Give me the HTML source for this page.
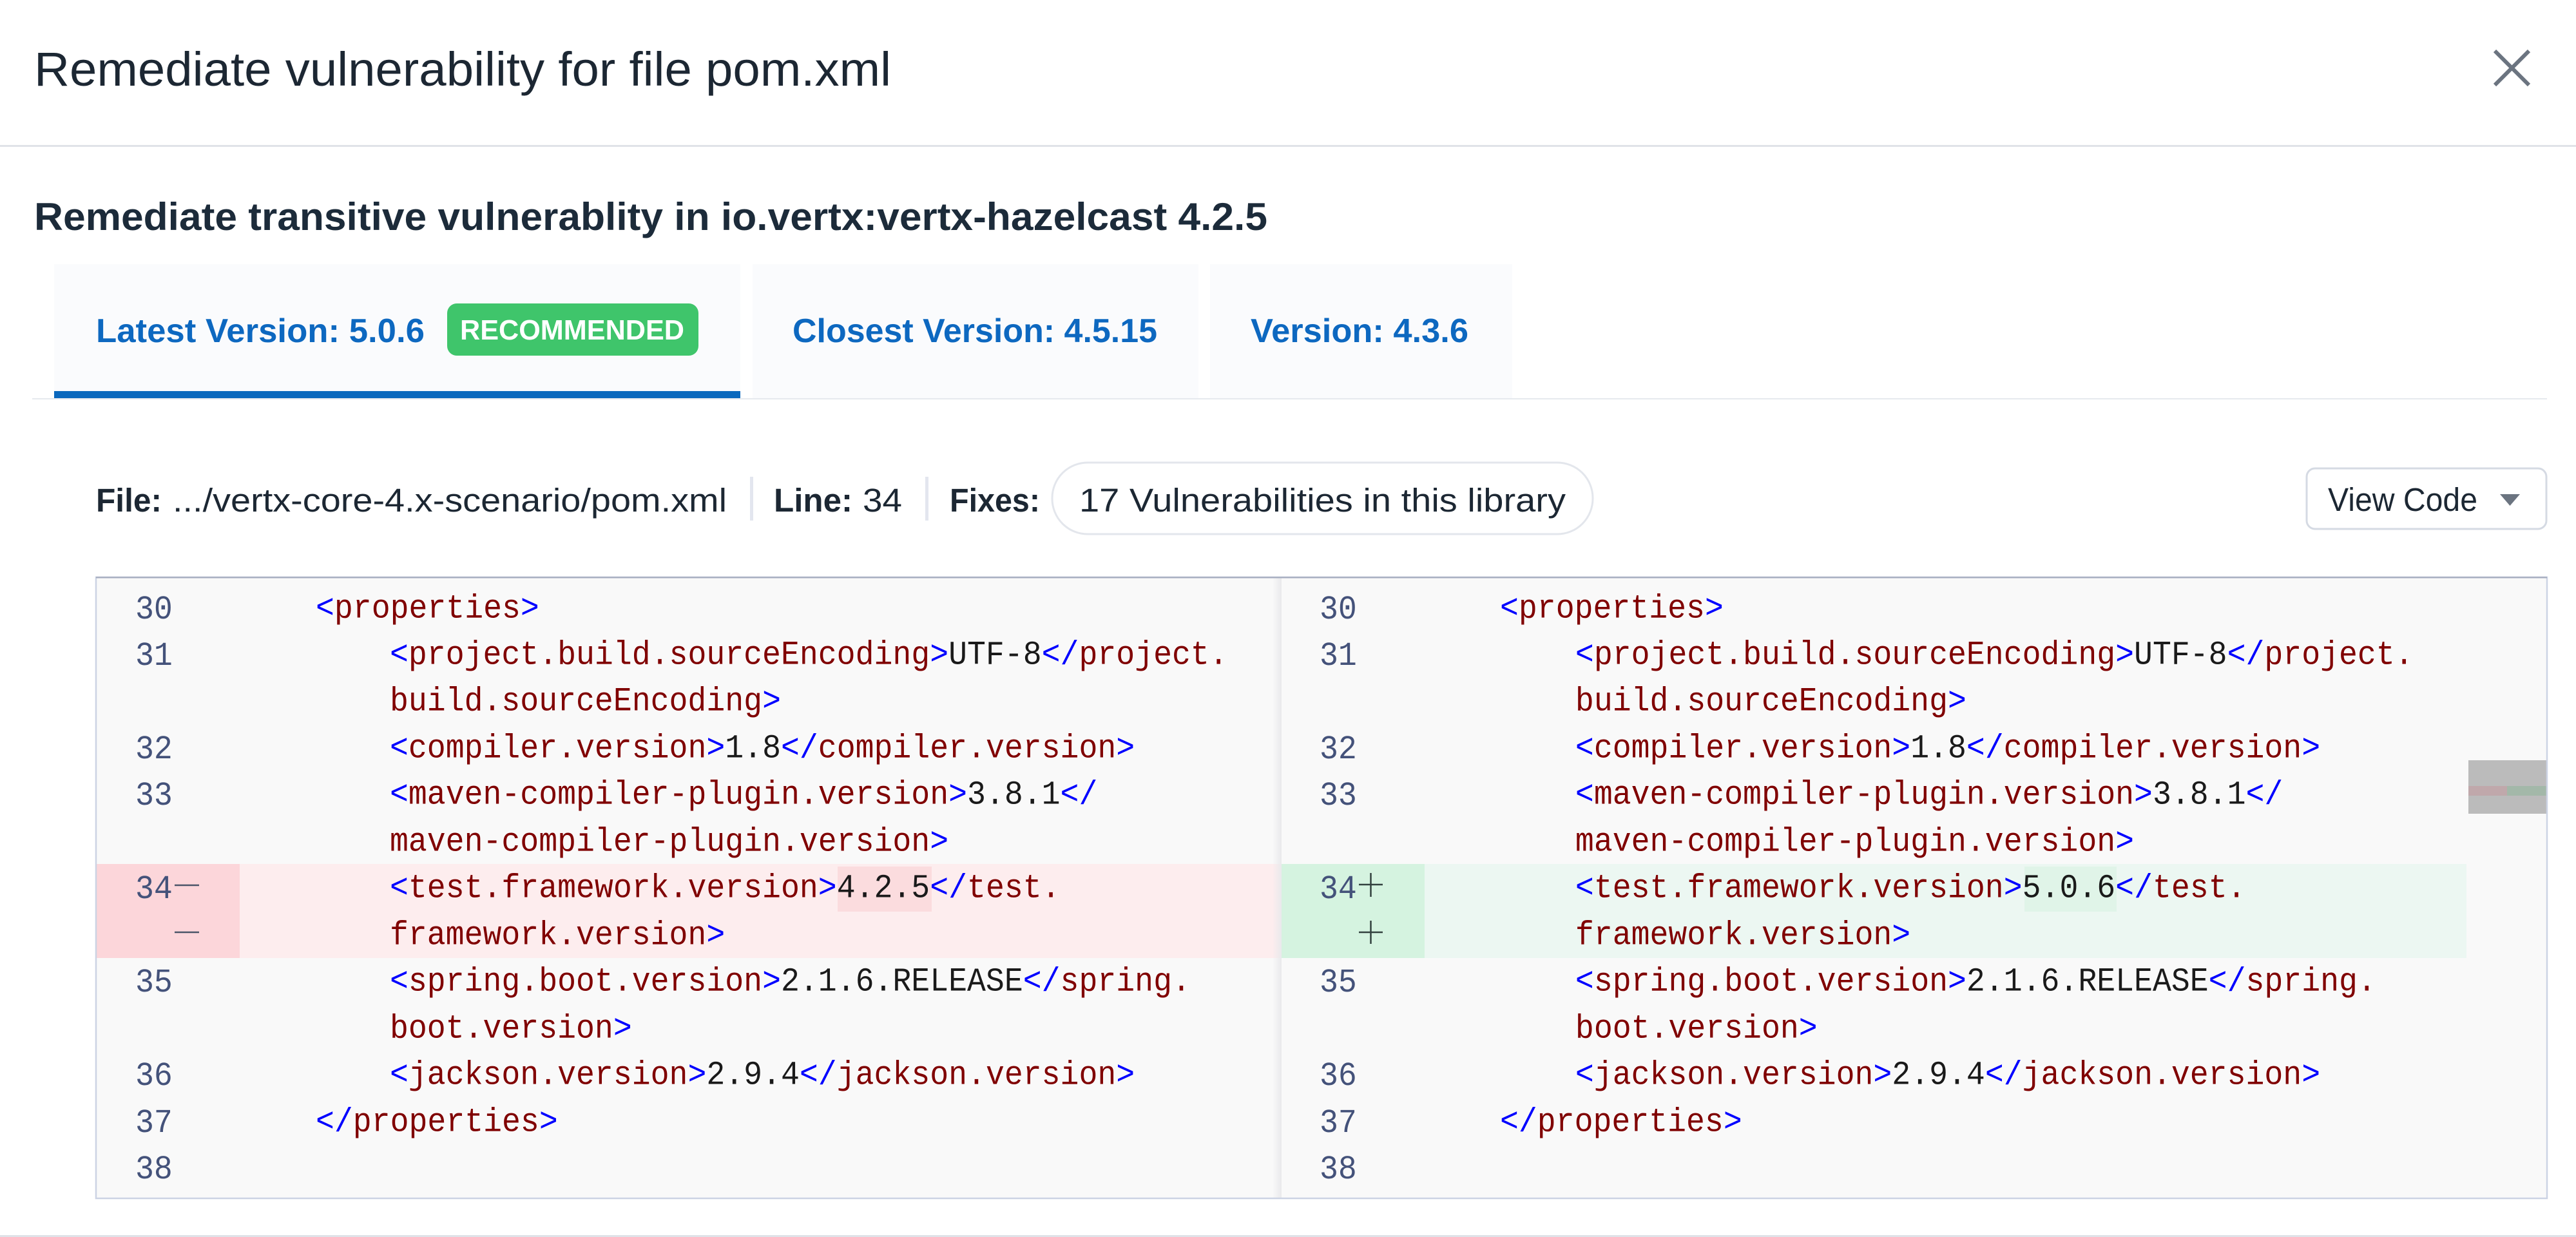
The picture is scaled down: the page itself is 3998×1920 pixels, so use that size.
<!DOCTYPE html>
<html>
<head>
<meta charset="utf-8">
<style>
html,body{margin:0;padding:0;background:#fff;width:3998px;height:1920px;overflow:hidden}
svg{display:block}
.s{font-family:"Liberation Sans",sans-serif}
.m{font-family:"Liberation Mono",monospace;font-size:52px}
.t{fill:#800000}.b{fill:#0000ff}.d{fill:#1a1a1a}.n{fill:#44527a}
</style>
</head>
<body>
<svg width="3998" height="1920" viewBox="0 0 3998 1920" xmlns="http://www.w3.org/2000/svg">
<defs>
<linearGradient id="sh" x1="0" x2="1" y1="0" y2="0"><stop offset="0" stop-color="#e9e9eb" stop-opacity="0"/><stop offset="1" stop-color="#e9e9ec"/></linearGradient>
</defs>
<rect width="3998" height="1920" fill="#fff"/>

<!-- header -->
<text class="s" x="53" y="133" font-size="74" fill="#1c2733" textLength="1330" lengthAdjust="spacingAndGlyphs">Remediate vulnerability for file pom.xml</text>
<path d="M3872 79L3925 132M3925 79L3872 132" stroke="#6b7480" stroke-width="6" fill="none"/>
<rect x="0" y="225" width="3998" height="3" fill="#e0e3e8"/>

<text class="s" x="53" y="357" font-size="60" font-weight="700" fill="#1c2b3a" textLength="1914" lengthAdjust="spacingAndGlyphs">Remediate transitive vulnerablity in io.vertx:vertx-hazelcast 4.2.5</text>

<!-- tabs -->
<rect x="50" y="618" width="3903" height="2" fill="#e6e9ee"/>
<rect x="84" y="410" width="1065" height="197" fill="#fafbfd"/>
<rect x="84" y="607" width="1065" height="11" fill="#0b68bd"/>
<rect x="1168" y="410" width="692" height="208" fill="#fafbfd"/>
<rect x="1878" y="410" width="469" height="208" fill="#fafbfd"/>
<text class="s" x="149" y="531" font-size="52" font-weight="700" fill="#0d68c0" textLength="510" lengthAdjust="spacingAndGlyphs">Latest Version: 5.0.6</text>
<rect x="694" y="471" width="390" height="81" rx="15" fill="#3fc56b"/>
<text class="s" x="714" y="527" font-size="44" font-weight="700" fill="#fff" textLength="348" lengthAdjust="spacingAndGlyphs">RECOMMENDED</text>
<text class="s" x="1230" y="531" font-size="52" font-weight="700" fill="#0d68c0" textLength="566" lengthAdjust="spacingAndGlyphs">Closest Version: 4.5.15</text>
<text class="s" x="1941" y="531" font-size="52" font-weight="700" fill="#0d68c0" textLength="338" lengthAdjust="spacingAndGlyphs">Version: 4.3.6</text>

<!-- file row -->
<text class="s" x="149" y="794" font-size="51" font-weight="700" fill="#1c2733" textLength="102" lengthAdjust="spacingAndGlyphs">File:</text>
<text class="s" x="268" y="794" font-size="51" fill="#1c2733" textLength="860" lengthAdjust="spacingAndGlyphs">.../vertx-core-4.x-scenario/pom.xml</text>
<rect x="1164" y="740" width="5" height="68" fill="#e3e6ef"/>
<text class="s" x="1201" y="794" font-size="51" font-weight="700" fill="#1c2733" textLength="122" lengthAdjust="spacingAndGlyphs">Line:</text>
<text class="s" x="1339" y="794" font-size="51" fill="#1c2733" textLength="61" lengthAdjust="spacingAndGlyphs">34</text>
<rect x="1436" y="740" width="5" height="68" fill="#e3e6ef"/>
<text class="s" x="1474" y="794" font-size="51" font-weight="700" fill="#1c2733" textLength="140" lengthAdjust="spacingAndGlyphs">Fixes:</text>
<rect x="1633" y="718" width="839" height="111" rx="55" fill="#fff" stroke="#e3e6ec" stroke-width="3"/>
<text class="s" x="1675" y="794" font-size="51" fill="#1c2733" textLength="755" lengthAdjust="spacingAndGlyphs">17 Vulnerabilities in this library</text>
<rect x="3580" y="727" width="372" height="94" rx="13" fill="#fff" stroke="#d5dae3" stroke-width="3"/>
<text class="s" x="3613" y="793" font-size="51" fill="#1c2733" textLength="232" lengthAdjust="spacingAndGlyphs">View Code</text>
<path d="M3880 767H3911L3895.500 785Z" fill="#6b7480"/>

<!-- diff box -->
<rect x="149" y="896" width="3804" height="964" fill="#f9f9f9"/>
<rect x="150" y="1341" width="222" height="146" fill="#fcd6da"/>
<rect x="372" y="1341" width="1617" height="146" fill="#fdedee"/>
<rect x="1300" y="1345" width="146" height="70" fill="#fbdcde"/>
<rect x="1989" y="1341" width="222" height="146" fill="#d5f3e0"/>
<rect x="2211" y="1341" width="1617" height="146" fill="#ecf7f2"/>
<rect x="3142" y="1345" width="143" height="70" fill="#e0f4e8"/>
<rect x="1975" y="896" width="14" height="964" fill="url(#sh)"/>
<rect x="3831" y="1180" width="121" height="83" fill="#bbbbbb"/>
<rect x="3831" y="1220" width="60" height="15" fill="#c0a8ab"/>
<rect x="3891" y="1220" width="61" height="15" fill="#a3b8a9"/>
<rect x="149" y="896" width="3804" height="964" fill="none" stroke="#ccd3e4" stroke-width="2.500"/>
<rect x="149" y="895" width="3804" height="2.500" fill="#a9b0c2"/>

<!-- markers -->
<path d="M271 1374H309M271 1447H309" stroke="#4a5568" stroke-width="2.500" fill="none"/>
<path d="M2109 1373H2146M2127.500 1355V1392M2109 1447H2146M2127.500 1429V1465" stroke="#33413f" stroke-width="2.500" fill="none"/>

<g transform="scale(.9266,1)" class="m">
<!-- left line numbers -->
<g class="n">
<text x="226.600" y="960">30</text>
<text x="226.600" y="1032">31</text>
<text x="226.600" y="1177">32</text>
<text x="226.600" y="1249">33</text>
<text x="226.600" y="1394">34</text>
<text x="226.600" y="1539">35</text>
<text x="226.600" y="1684">36</text>
<text x="226.600" y="1757">37</text>
<text x="226.600" y="1829">38</text>
</g>
<!-- right line numbers -->
<g class="n">
<text x="2210.200" y="960">30</text>
<text x="2210.200" y="1032">31</text>
<text x="2210.200" y="1177">32</text>
<text x="2210.200" y="1249">33</text>
<text x="2210.200" y="1394">34</text>
<text x="2210.200" y="1539">35</text>
<text x="2210.200" y="1684">36</text>
<text x="2210.200" y="1757">37</text>
<text x="2210.200" y="1829">38</text>
</g>
<g transform="translate(0,-1.500)">
<!-- left code -->
<text x="528.800" y="960"><tspan class="b">&lt;</tspan><tspan class="t">properties</tspan><tspan class="b">&gt;</tspan></text>
<text x="652.900" y="1032"><tspan class="b">&lt;</tspan><tspan class="t">project.build.sourceEncoding</tspan><tspan class="b">&gt;</tspan><tspan class="d">UTF-8</tspan><tspan class="b">&lt;/</tspan><tspan class="t">project.</tspan></text>
<text x="652.900" y="1104"><tspan class="t">build.sourceEncoding</tspan><tspan class="b">&gt;</tspan></text>
<text x="652.900" y="1177"><tspan class="b">&lt;</tspan><tspan class="t">compiler.version</tspan><tspan class="b">&gt;</tspan><tspan class="d">1.8</tspan><tspan class="b">&lt;/</tspan><tspan class="t">compiler.version</tspan><tspan class="b">&gt;</tspan></text>
<text x="652.900" y="1249"><tspan class="b">&lt;</tspan><tspan class="t">maven-compiler-plugin.version</tspan><tspan class="b">&gt;</tspan><tspan class="d">3.8.1</tspan><tspan class="b">&lt;/</tspan></text>
<text x="652.900" y="1322"><tspan class="t">maven-compiler-plugin.version</tspan><tspan class="b">&gt;</tspan></text>
<text x="652.900" y="1394"><tspan class="b">&lt;</tspan><tspan class="t">test.framework.version</tspan><tspan class="b">&gt;</tspan><tspan class="d">4.2.5</tspan><tspan class="b">&lt;/</tspan><tspan class="t">test.</tspan></text>
<text x="652.900" y="1467"><tspan class="t">framework.version</tspan><tspan class="b">&gt;</tspan></text>
<text x="652.900" y="1539"><tspan class="b">&lt;</tspan><tspan class="t">spring.boot.version</tspan><tspan class="b">&gt;</tspan><tspan class="d">2.1.6.RELEASE</tspan><tspan class="b">&lt;/</tspan><tspan class="t">spring.</tspan></text>
<text x="652.900" y="1612"><tspan class="t">boot.version</tspan><tspan class="b">&gt;</tspan></text>
<text x="652.900" y="1684"><tspan class="b">&lt;</tspan><tspan class="t">jackson.version</tspan><tspan class="b">&gt;</tspan><tspan class="d">2.9.4</tspan><tspan class="b">&lt;/</tspan><tspan class="t">jackson.version</tspan><tspan class="b">&gt;</tspan></text>
<text x="528.800" y="1757"><tspan class="b">&lt;/</tspan><tspan class="t">properties</tspan><tspan class="b">&gt;</tspan></text>
<!-- right code -->
<text x="2512.400" y="960"><tspan class="b">&lt;</tspan><tspan class="t">properties</tspan><tspan class="b">&gt;</tspan></text>
<text x="2638.600" y="1032"><tspan class="b">&lt;</tspan><tspan class="t">project.build.sourceEncoding</tspan><tspan class="b">&gt;</tspan><tspan class="d">UTF-8</tspan><tspan class="b">&lt;/</tspan><tspan class="t">project.</tspan></text>
<text x="2638.600" y="1104"><tspan class="t">build.sourceEncoding</tspan><tspan class="b">&gt;</tspan></text>
<text x="2638.600" y="1177"><tspan class="b">&lt;</tspan><tspan class="t">compiler.version</tspan><tspan class="b">&gt;</tspan><tspan class="d">1.8</tspan><tspan class="b">&lt;/</tspan><tspan class="t">compiler.version</tspan><tspan class="b">&gt;</tspan></text>
<text x="2638.600" y="1249"><tspan class="b">&lt;</tspan><tspan class="t">maven-compiler-plugin.version</tspan><tspan class="b">&gt;</tspan><tspan class="d">3.8.1</tspan><tspan class="b">&lt;/</tspan></text>
<text x="2638.600" y="1322"><tspan class="t">maven-compiler-plugin.version</tspan><tspan class="b">&gt;</tspan></text>
<text x="2638.600" y="1394"><tspan class="b">&lt;</tspan><tspan class="t">test.framework.version</tspan><tspan class="b">&gt;</tspan><tspan class="d">5.0.6</tspan><tspan class="b">&lt;/</tspan><tspan class="t">test.</tspan></text>
<text x="2638.600" y="1467"><tspan class="t">framework.version</tspan><tspan class="b">&gt;</tspan></text>
<text x="2638.600" y="1539"><tspan class="b">&lt;</tspan><tspan class="t">spring.boot.version</tspan><tspan class="b">&gt;</tspan><tspan class="d">2.1.6.RELEASE</tspan><tspan class="b">&lt;/</tspan><tspan class="t">spring.</tspan></text>
<text x="2638.600" y="1612"><tspan class="t">boot.version</tspan><tspan class="b">&gt;</tspan></text>
<text x="2638.600" y="1684"><tspan class="b">&lt;</tspan><tspan class="t">jackson.version</tspan><tspan class="b">&gt;</tspan><tspan class="d">2.9.4</tspan><tspan class="b">&lt;/</tspan><tspan class="t">jackson.version</tspan><tspan class="b">&gt;</tspan></text>
<text x="2512.400" y="1757"><tspan class="b">&lt;/</tspan><tspan class="t">properties</tspan><tspan class="b">&gt;</tspan></text>
</g>
</g>

<!-- footer divider -->
<rect x="0" y="1917" width="3998" height="3" fill="#dfe2e8"/>
</svg>
</body>
</html>
